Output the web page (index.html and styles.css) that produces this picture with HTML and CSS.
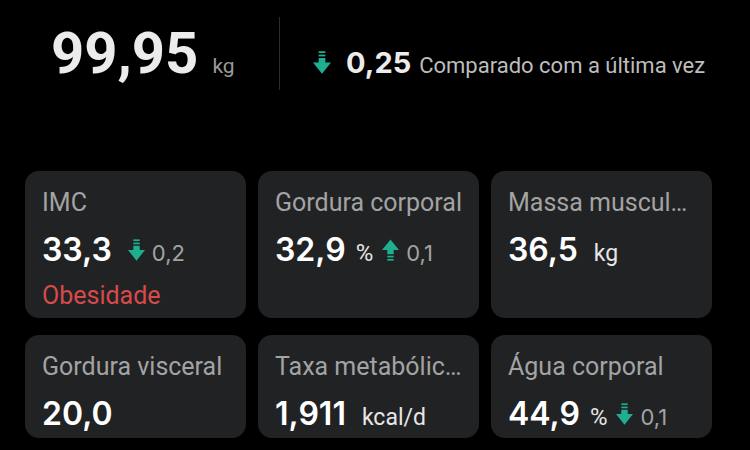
FILE: index.html
```html
<!DOCTYPE html>
<html>

<head>
  <meta charset="utf-8">
  <meta name="viewport" content="width=device-width">
  <title>Peso</title>
  <link rel="stylesheet" href="styles.css">
</head>

<body>
  <header class="summary">
    <div class="weight">
      <span class="weight-value">99,95</span>
      <span class="weight-unit">kg</span>
    </div>

    <div class="divider"></div>

    <div class="change">
      <svg class="arrow arrow-big" viewBox="0 0 16 20">
        <rect x="5" y="0" width="6" height="1.6" />
        <rect x="5" y="3" width="6" height="1.6" />
        <rect x="5" y="6" width="6" height="5" />
        <polygon points="0,10 16,10 8,20" />
      </svg>
      <span class="change-value">0,25</span>
      <span class="change-text">Comparado com a última vez</span>
    </div>
  </header>

  <main class="grid">

    <section class="card">
      <div class="card-title">IMC</div>
      <div class="card-row">
        <span class="card-value">33,3</span>
        <svg class="arrow" viewBox="0 0 16 20">
          <rect x="5" y="0" width="6" height="1.6" />
          <rect x="5" y="3" width="6" height="1.6" />
          <rect x="5" y="6" width="6" height="5" />
          <polygon points="0,10 16,10 8,20" />
        </svg>
        <span class="card-delta">0,2</span>
      </div>
      <div class="card-status">Obesidade</div>
    </section>

    <section class="card">
      <div class="card-title">Gordura corporal</div>
      <div class="card-row">
        <span class="card-value">32,9</span>
        <span class="card-unit percent">%</span>
        <!-- same arrow, turned upside down -->
        <svg class="arrow arrow-up" viewBox="0 0 16 20">
          <rect x="5" y="0" width="6" height="1.6" />
          <rect x="5" y="3" width="6" height="1.6" />
          <rect x="5" y="6" width="6" height="5" />
          <polygon points="0,10 16,10 8,20" />
        </svg>
        <span class="card-delta">0,1</span>
      </div>
    </section>

    <section class="card">
      <div class="card-title">Massa muscul…</div>
      <div class="card-row">
        <span class="card-value">36,5</span>
        <span class="card-unit">kg</span>
      </div>
    </section>

    <section class="card">
      <div class="card-title">Gordura visceral</div>
      <div class="card-row">
        <span class="card-value">20,0</span>
      </div>
    </section>

    <section class="card">
      <div class="card-title">Taxa metabólic…</div>
      <div class="card-row">
        <span class="card-value">1,911</span>
        <span class="card-unit">kcal/d</span>
      </div>
    </section>

    <section class="card">
      <div class="card-title">Água corporal</div>
      <div class="card-row">
        <span class="card-value">44,9</span>
        <span class="card-unit percent">%</span>
        <svg class="arrow" viewBox="0 0 16 20">
          <rect x="5" y="0" width="6" height="1.6" />
          <rect x="5" y="3" width="6" height="1.6" />
          <rect x="5" y="6" width="6" height="5" />
          <polygon points="0,10 16,10 8,20" />
        </svg>
        <span class="card-delta">0,1</span>
      </div>
    </section>

  </main>
</body>

</html>
```

FILE: styles.css
```css
* {
  box-sizing: border-box;
}

body {
  margin: 0;
  width: 750px;
  height: 450px;
  overflow: hidden;
  background-color: #000;
  color: #fff;
  font-family: Roboto, "Noto Sans", sans-serif;
}

/* top summary */
.summary {
  display: flex;
  align-items: baseline;
  height: 107px;
  padding-top: 17px;
  padding-left: 51px;
}

.weight {
  display: flex;
  align-items: baseline;
  width: 228px;
  margin-top: 7px;
}

.weight-value {
  font-size: 58px;
  font-weight: bold;
  color: #ececec;
  line-height: 1;
}

.weight-unit {
  margin-left: 14px;
  font-size: 21px;
  color: #9a9a9a;
}

.divider {
  align-self: flex-start;
  width: 1px;
  height: 73px;
  background-color: #2c2c2c;
}

.change {
  display: flex;
  align-items: baseline;
  margin-left: 33px;
  line-height: 1;
}

.change-value {
  margin-left: 15px;
  font-family: Inter, Roboto, sans-serif;
  font-size: 29px;
  font-weight: bold;
  color: #ececec;
}

.change-text {
  margin-left: 8px;
  font-size: 22px;
  color: #bdbdbd;
}

.arrow {
  width: 17px;
  height: 22px;
  fill: #1fae8f;
  align-self: center;
}

.arrow-big {
  width: 18px;
  height: 23px;
}

.arrow-up {
  transform: rotate(180deg);
}

/* cards */
.grid {
  display: grid;
  grid-template-columns: repeat(3, 221px);
  grid-template-rows: 147px 103px;
  column-gap: 12px;
  row-gap: 17px;
  margin-top: 64px;
  margin-left: 25px;
}

.card {
  border-radius: 14px;
  background-color: #212224;
  padding: 17px 16px 0 17px;
  min-width: 0;
}

.card-title {
  font-size: 25px;
  color: #a3a3a3;
  white-space: nowrap;
  overflow: hidden;
  text-overflow: ellipsis;
  line-height: 30px;
}

.card-row {
  display: flex;
  align-items: baseline;
  height: 38px;
  margin-top: 13px;
  line-height: 38px;
}

.card-value {
  font-family: Inter, Roboto, sans-serif;
  font-size: 32px;
  font-weight: 600;
}

.card-unit {
  margin-left: 16px;
  font-size: 23px;
  color: #e6e6e6;
}

.card-unit.percent {
  margin-left: 10px;
  font-size: 24px;
}

.card-row .arrow {
  margin-left: 16px;
}

.card-row .card-unit + .arrow {
  margin-left: 9px;
}

.card-delta {
  margin-left: 7px;
  font-family: Inter, Roboto, sans-serif;
  font-size: 22px;
  color: #a3a3a3;
}

.card-status {
  margin-top: 12px;
  font-size: 25px;
  line-height: 30px;
  color: #d84a4a;
}
```
